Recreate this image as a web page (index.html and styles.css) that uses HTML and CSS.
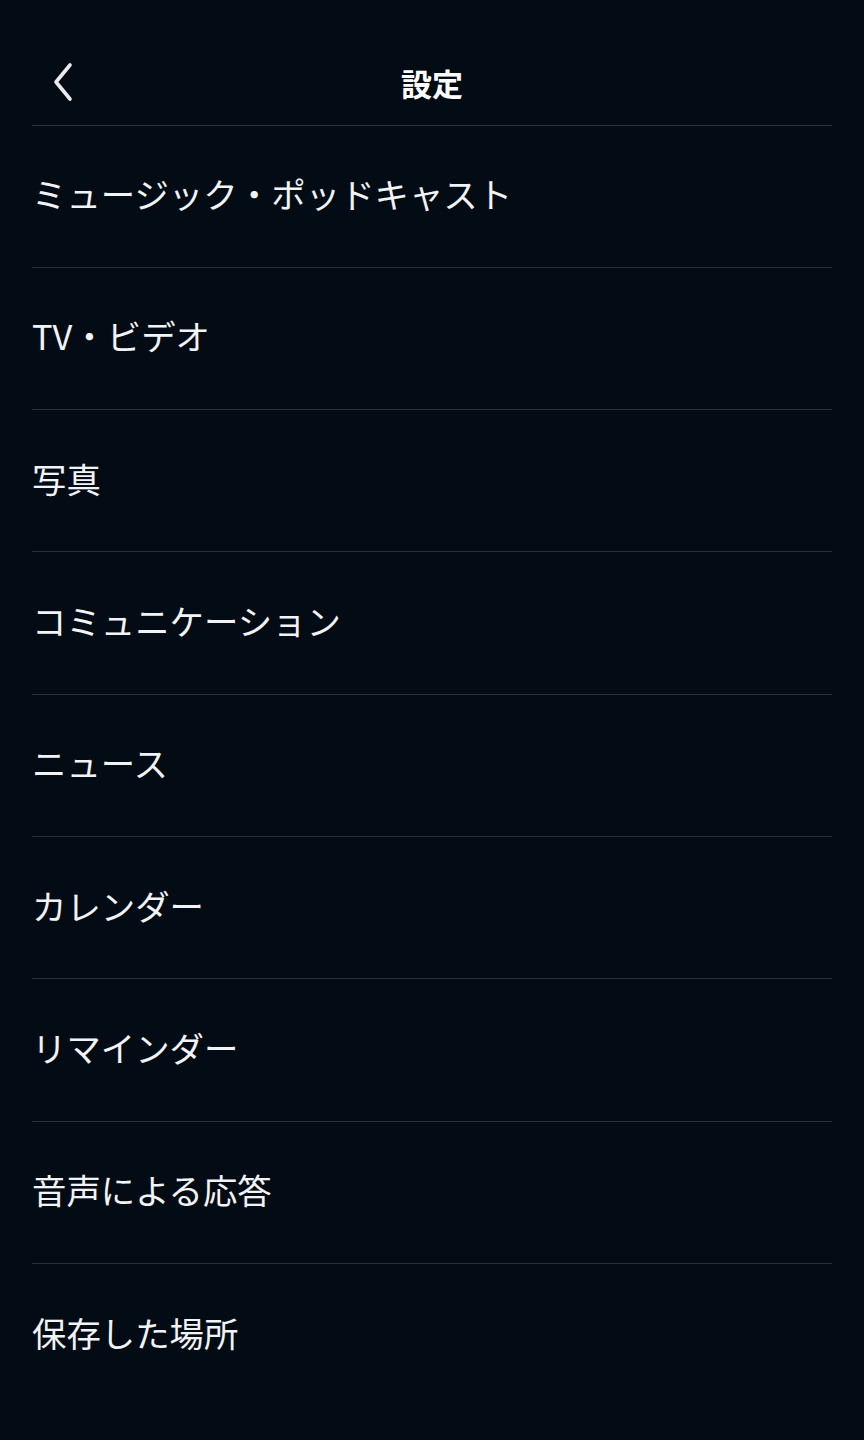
FILE: index.html
```html
<!DOCTYPE html>
<html lang="ja">
<head>
<meta charset="utf-8">
<link rel="stylesheet" href="styles.css">
</head>
<body>
<div class="screen">
  <header class="header">
    <svg class="back" width="28" height="40" viewBox="0 0 28 40"><path d="M22 3 L8 20 L22 37" fill="none" stroke="#e8eaec" stroke-width="3.6" stroke-linecap="round" stroke-linejoin="round"/></svg>
    <h1 class="title">設定</h1>
  </header>
  <ul class="list">
    <li class="row">ミュージック・ポッドキャスト</li>
    <li class="row">TV・ビデオ</li>
    <li class="row">写真</li>
    <li class="row">コミュニケーション</li>
    <li class="row">ニュース</li>
    <li class="row">カレンダー</li>
    <li class="row">リマインダー</li>
    <li class="row">音声による応答</li>
    <li class="row">保存した場所</li>
  </ul>
</div>
</body>
</html>
```
FILE: styles.css
```css
html, body {
  margin: 0;
  padding: 0;
  background: #030b14;
}
body {
  width: 864px;
  height: 1440px;
  overflow: hidden;
  font-family: "Noto Sans CJK JP", "Noto Sans", sans-serif;
  color: #f2f3f5;
}
.screen {
  padding: 0 32px;
}
.header {
  position: relative;
  height: 125.5px;
  display: flex;
  align-items: center;
  justify-content: center;
  border-bottom: 1.5px solid #2e363e;
  box-sizing: border-box;
  padding-top: 40px;
}
.back {
  position: absolute;
  left: 16px;
  top: 62px;
}
.title {
  margin: 0;
  font-size: 31px;
  font-weight: 700;
  color: #ffffff;
}
.list {
  list-style: none;
  margin: 0;
  padding: 0;
}
.row {
  height: 142.3px;
  box-sizing: border-box;
  display: flex;
  align-items: center;
  font-size: 34.4px;
  font-weight: 400;
  border-bottom: 1.5px solid #29313a;
  padding-bottom: 6px;
}
.row:last-child {
  border-bottom: none;
}
```
